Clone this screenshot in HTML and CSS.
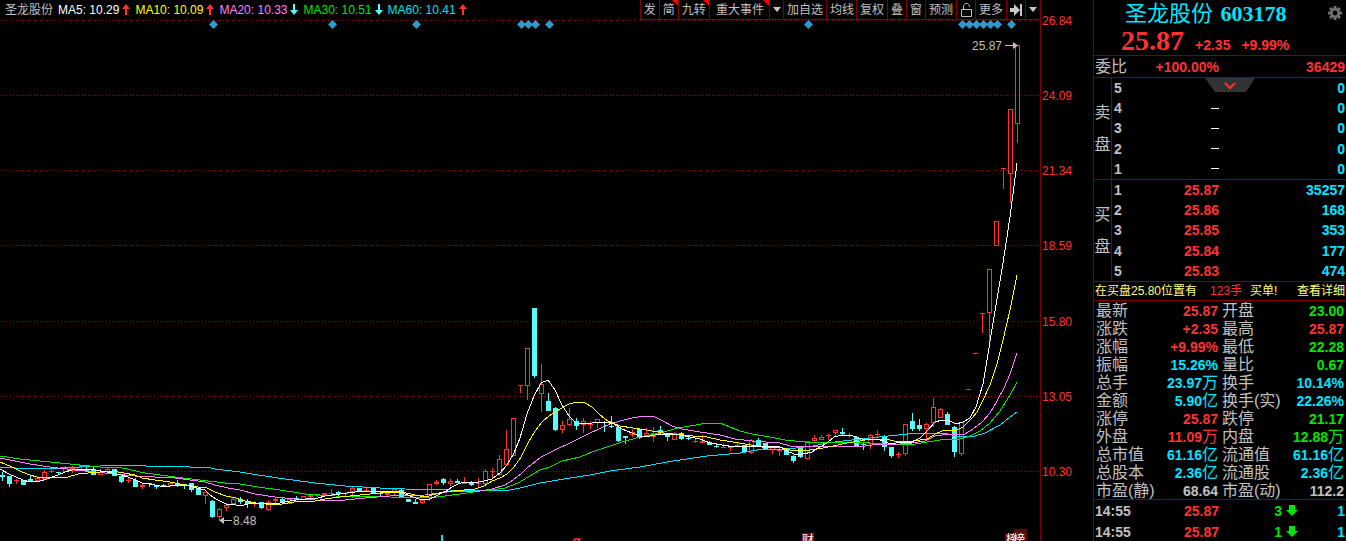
FILE: index.html
```html
<!DOCTYPE html>
<html lang="zh-CN">
<head>
<meta charset="utf-8">
<title>圣龙股份 603178</title>
<link rel="stylesheet" href="styles.css">
</head>
<body>
<main class="terminal">
  <section class="chart">
    <header class="chart-head">
      <div class="legend">
        <span class="legend-name">圣龙股份</span>
        <span class="ma ma5">MA5: 10.29<svg class="arrow up" viewBox="0 0 8 12"><path d="M4 0L8 5H5V11H3V5H0Z"/></svg></span>
        <span class="ma ma10">MA10: 10.09<svg class="arrow up" viewBox="0 0 8 12"><path d="M4 0L8 5H5V11H3V5H0Z"/></svg></span>
        <span class="ma ma20">MA20: 10.33<svg class="arrow down" viewBox="0 0 8 12"><path d="M4 11L8 6H5V0H3V6H0Z"/></svg></span>
        <span class="ma ma30">MA30: 10.51<svg class="arrow down" viewBox="0 0 8 12"><path d="M4 11L8 6H5V0H3V6H0Z"/></svg></span>
        <span class="ma ma60">MA60: 10.41<svg class="arrow up" viewBox="0 0 8 12"><path d="M4 0L8 5H5V11H3V5H0Z"/></svg></span>
      </div>
      <nav class="toolbar">
        <button>发</button><button class="flag">简</button><button class="flag">九转</button><button class="flag wide">重大事件</button><button class="tight" aria-label="展开事件"><svg width="8" height="5"><path d="M0 0H8L4 5Z"/></svg></button><button>加自选</button><button class="tight">均线</button><button>复权</button><button>叠</button><button>窗</button><button>预测</button><button aria-label="锁定"><svg width="12" height="15" class="lock"><path d="M1.500 7.500H11.500V14.500H1.500ZM3.500 7V3.500L5.500 1.500H7.500L9.500 3.500V5"/></svg></button><button>更多</button><button aria-label="移到最后"><svg width="12" height="12"><path d="M0 4H4V0L10 6L4 12V8H0ZM10 0H12V12H10Z"/></svg></button><button aria-label="展开菜单"><svg width="8" height="5"><path d="M0 0H8L4 5Z"/></svg></button>
      </nav>
    </header>
    <svg class="plot" viewBox="0 20 1093 521" preserveAspectRatio="xMinYMin meet">
      <path class="grid" d="M1 20.500H1040M1 95.500H1040M1 170.500H1040M1 245.500H1040M1 321.500H1040M1 396.500H1040M1 471.500H1040"/>
      <path class="axis" d="M1040.500 0V541"/>
      <g class="axis-text">
        <text x="1042" y="25">26.84</text><text x="1042" y="100">24.09</text><text x="1042" y="175">21.34</text><text x="1042" y="250">18.59</text><text x="1042" y="326">15.80</text><text x="1042" y="401">13.05</text><text x="1042" y="476">10.30</text>
      </g>
      <g id="diamonds" class="diamond"></g>
      <g id="candles"></g>
      <g class="lines">
        <polyline class="l60" points="0,467 15,468 60,468 80,467 100,466 125,465 145,465 146,466 187,466 190,467 207,467 215,469 240,472 258,475 285,479 315,483 345,486 380,488 405,489 450,490 510,490 520,488 540,483 570,478 590,475 610,471 640,467 673,461 707,456 740,453 757,450 787,449 813,446 827,443 843,441 870,438 907,434 925,433 945,433 955,436 975,436 985,433 1000,425 1010,417 1017,412"/>
        <polyline class="l30" points="0,456 20,459 50,462 80,465 100,467 122,468 145,473 175,477 200,480 225,483 240,484 258,487 280,490 305,494 335,496 390,497 430,498 445,496 460,494 480,491 492,490 505,488 518,483 528,477 540,470 550,467 562,461 580,457 592,452 610,446 622,442 640,437 660,433 678,428 690,426 707,423 720,423 730,427 740,431 752,434 770,437 785,440 805,442 840,442 870,443 895,445 915,444 940,440 960,439 970,436 980,431 990,423 1000,411 1010,395 1017,382"/>
        <polyline class="l20" points="0,458 15,461 30,464 50,467 75,470 95,472 115,474 135,476 155,477 175,478 190,480 205,482 215,485 228,488 240,490 255,494 275,497 295,499 315,500 345,500 365,498 390,496 425,495 440,493 455,491 480,491 492,489 505,485 513,480 521,474 527,468 541,457 555,450 570,443 590,433 610,424 620,421 632,418 645,416 655,417 663,421 672,426 682,429 700,432 720,435 735,439 752,441 780,443 790,446 800,447 838,446 865,446 880,444 900,444 912,443 925,441 935,436 950,434 965,434 973,429 982,422 990,413 997,401 1004,388 1010,374 1017,353"/>
        <polyline class="l10" points="0,462 12,467 22,472 30,475 37,477 68,477 78,474 88,473 100,472 112,471 124,473 135,475 142,478 155,480 170,482 185,485 198,487 205,487 215,492 226,496 236,498 245,501 256,503 266,504 274,505 282,504 294,502 315,501 325,499 340,497 360,495 380,493 402,492 415,495 425,497 436,494 443,492 464,490 475,489 484,486 492,481 500,478 507,474 514,467 521,457 528,443 535,431 542,422 549,416 560,409 569,404 577,402 585,403 592,407 600,415 608,421 620,426 633,428 647,430 663,433 693,436 707,437 720,440 733,442 745,444 762,447 783,448 790,450 810,450 823,448 833,446 847,443 860,441 870,439 887,439 897,442 913,441 927,439 937,433 945,430 955,431 963,427 972,418 977,412 983,400 990,385 997,364 1003,340 1010,310 1017,275"/>
        <polyline class="l5" points="0,469 9,474 16,477 23,480 30,482 40,481 47,479 58,475 65,472 72,470 82,469 95,470 107,472 121,475 128,477 135,480 142,483 150,484 160,486 170,486 180,485 190,486 197,488 205,490 210,495 216,499 226,504 236,505 240,506 248,504 256,503 268,504 280,503 290,501 296,500 306,499 318,498 325,496 340,494 355,492 385,491 400,492 408,495 413,497 422,500 430,499 438,495 446,491 452,487 458,484 464,482 474,483 484,481 492,479 500,473 507,465 514,453 520,438 527,414 534,396 541,383 548,380 555,390 562,405 569,416 576,423 585,424 592,423 605,422 614,424 622,429 632,433 640,436 650,436 660,434 680,435 690,437 700,439 710,443 722,445 735,447 750,446 780,447 787,451 794,454 803,454 812,452 820,447 827,443 834,437 842,435 850,435 856,437 862,439 876,439 884,441 890,444 902,442 912,442 920,438 927,431 935,422 942,420 950,421 956,424 963,422 970,418 976,407 983,384 987,360 994,317 1003,263 1010,217 1017,163"/>
      </g>
      <g class="callout">
        <text x="972" y="50">25.87</text><path d="M1005 45H1013V42L1018 45.500L1013 49V46H1005Z"/>
        <text x="233" y="525">8.48</text><path d="M232 520H224V517L219 520.500L224 524V521H232Z"/>
      </g>
      <rect class="cursor" x="441" y="535" width="2" height="6"/>
      <text class="q" x="572" y="546">q</text>
      <g class="tag">
        <rect x="802" y="533" width="12" height="8"/><text x="802" y="544">财</text>
        <rect x="1005" y="533" width="10" height="8"/><text x="1006" y="544">榜</text>
        <rect class="top" x="1014" y="529" width="13" height="12"/><text x="1013" y="544">榜</text>
      </g>
    </svg>
  </section>

  <aside class="quote">
    <header class="quote-head">
      <h1 class="title">圣龙股份 <span>603178</span></h1>
      <button class="gear" aria-label="设置"><svg width="14" height="14" viewBox="-7 -7 14 14"><g><path d="M-1.500 -7H1.500V7H-1.500Z"/><path d="M-1.500 -7H1.500V7H-1.500Z" transform="rotate(45)"/><path d="M-1.500 -7H1.500V7H-1.500Z" transform="rotate(90)"/><path d="M-1.500 -7H1.500V7H-1.500Z" transform="rotate(135)"/><circle r="5"/></g><circle class="hole" r="2.400"/></svg></button>
      <p class="price"><strong>25.87</strong><span>+2.35</span><span>+9.99%</span></p>
    </header>
    <div class="ratio"><span class="cn">委比</span><b class="red">+100.00%</b><b class="red">36429</b></div>

    <div class="book">
      <button class="fold" aria-label="展开卖盘"><svg width="50" height="14"><path class="plate" d="M0 0H50L41 14H10Z"/><path class="chev" d="M20 5L25 10L30 5"/></svg></button>
      <div class="side"><span>卖</span><span>盘</span></div>
      <table class="levels">
        <tr><th>5</th><td></td><td>0</td></tr>
        <tr><th>4</th><td class="none"><i></i></td><td>0</td></tr>
        <tr><th>3</th><td class="none"><i></i></td><td>0</td></tr>
        <tr><th>2</th><td class="none"><i></i></td><td>0</td></tr>
        <tr><th>1</th><td class="none"><i></i></td><td>0</td></tr>
      </table>
    </div>
    <div class="book">
      <div class="side"><span>买</span><span>盘</span></div>
      <table class="levels">
        <tr><th>1</th><td>25.87</td><td>35257</td></tr>
        <tr><th>2</th><td>25.86</td><td>168</td></tr>
        <tr><th>3</th><td>25.85</td><td>353</td></tr>
        <tr><th>4</th><td>25.84</td><td>177</td></tr>
        <tr><th>5</th><td>25.83</td><td>474</td></tr>
      </table>
    </div>
    <p class="notice"><span>在买盘25.80位置有</span><span class="lots">123手</span><span class="order">买单!</span><a href="#detail">查看详细</a></p>

    <table class="stats">
      <tr><th>最新</th><td class="red">25.87</td><th>开盘</th><td class="green">23.00</td></tr>
      <tr><th>涨跌</th><td class="red">+2.35</td><th>最高</th><td class="red">25.87</td></tr>
      <tr><th>涨幅</th><td class="red">+9.99%</td><th>最低</th><td class="green">22.28</td></tr>
      <tr><th>振幅</th><td class="cyan">15.26%</td><th>量比</th><td class="green">0.67</td></tr>
      <tr><th>总手</th><td class="cyan">23.97<span>万</span></td><th>换手</th><td class="cyan">10.14%</td></tr>
      <tr><th>金额</th><td class="cyan">5.90<span>亿</span></td><th>换手(实)</th><td class="cyan">22.26%</td></tr>
      <tr><th>涨停</th><td class="red">25.87</td><th>跌停</th><td class="green">21.17</td></tr>
      <tr><th>外盘</th><td class="red">11.09<span>万</span></td><th>内盘</th><td class="green">12.88<span>万</span></td></tr>
      <tr><th>总市值</th><td class="cyan">61.16<span>亿</span></td><th>流通值</th><td class="cyan">61.16<span>亿</span></td></tr>
      <tr><th>总股本</th><td class="cyan">2.36<span>亿</span></td><th>流通股</th><td class="cyan">2.36<span>亿</span></td></tr>
      <tr><th>市盈(静)</th><td>68.64</td><th>市盈(动)</th><td>112.2</td></tr>
    </table>
    <table class="ticks">
      <tr><th>14:55</th><td class="red">25.87</td><td class="green">3 <svg width="12" height="11"><path d="M3 0H9V5H12L6 11L0 5H3Z"/></svg></td><td class="cyan">1</td></tr>
      <tr><th>14:55</th><td class="red">25.87</td><td class="green">1 <svg width="12" height="11"><path d="M3 0H9V5H12L6 11L0 5H3Z"/></svg></td><td class="cyan">1</td></tr>
    </table>
  </aside>
</main>
<script src="chart.js"></script>
</body>
</html>
```
FILE: styles.css
```css
* { box-sizing: border-box; }

body {
  margin: 0;
  background: #000;
  color: #c0c0c0;
  font: 12px/16px "Liberation Sans", "Noto Sans CJK SC", sans-serif;
  overflow: hidden;
}

button {
  margin: 0;
  padding: 0;
  border: 0;
  background: none;
  color: inherit;
  font: inherit;
}

.terminal { display: flex; height: 100vh; }

/* chart */
.chart { flex: 1; min-width: 0; display: flex; flex-direction: column; }
.chart-head {
  display: flex;
  justify-content: space-between;
  height: 20px;
  margin-right: 52px;
  white-space: nowrap;
}
.legend { display: flex; align-items: center; gap: 5px; padding-left: 5px; }
.ma { display: flex; align-items: center; gap: 3px; }
.ma5 { color: #fff; }
.ma10 { color: #ff0; }
.ma20 { color: #ff80ff; }
.ma30 { color: #00e600; }
.ma60 { color: #00e0e8; }
.arrow { width: 8px; height: 12px; }
.up { fill: #ff3232; }
.down { fill: #54fcfc; }

.toolbar { display: flex; border: solid #800000; border-width: 0 1px 1px 0; }
.toolbar button {
  position: relative;
  display: flex;
  align-items: center;
  padding: 0 3px;
  border-left: 1px solid #800000;
}
.toolbar .wide { padding: 0 5px 0 6px; }
.toolbar .tight { padding-right: 2px; }
.toolbar svg { fill: #c8c8c8; }
.toolbar .lock { fill: none; stroke: #c0c0c0; }
.flag::after {
  content: "";
  position: absolute;
  top: 0;
  right: 0;
  border: 3px solid;
  border-color: #f00 #f00 transparent transparent;
}

.plot { flex: 1; min-height: 0; width: 100%; overflow: visible; }
.grid { stroke: #900000; stroke-dasharray: 1 2; shape-rendering: crispEdges; }
.axis { stroke: #800000; shape-rendering: crispEdges; }
.axis-text { fill: #ff3232; }
.plot text { font-size: 12px; }
.diamond { fill: #2f9bcb; }
#candles { shape-rendering: crispEdges; }
.rise { fill: none; stroke: #ff3232; }
.fall { fill: #54fcfc; stroke: none; }
.lines { fill: none; shape-rendering: crispEdges; }
.l5 { stroke: #fff; }
.l10 { stroke: #ff0; }
.l20 { stroke: #ff80ff; }
.l30 { stroke: #00e600; }
.l60 { stroke: #00e0f8; }
.callout { fill: #c0c0c0; }
.cursor { fill: #00e0f8; }
.plot .q { fill: #ff3232; font-size: 14px; font-weight: bold; font-style: italic; }
.tag rect { fill: #780000; }
.tag .top { fill: #5c0a0a; }
.tag text { fill: #fff; }

/* quote panel */
.quote {
  flex: 0 0 253px;
  border-left: 1px solid #800000;
  font-size: 14px;
}
.quote-head { position: relative; height: 56px; border-bottom: 1px solid #800000; }
.title {
  margin: 0;
  padding: 1px 0 0 31px;
  color: #00e5ff;
  font: 22px/26px "Liberation Serif", "Noto Sans CJK SC", serif;
}
.title span { margin-left: 2px; font-weight: bold; }
.gear { position: absolute; top: 6px; right: 4px; height: 14px; line-height: 0; }
.gear g { fill: #707070; }
.hole { fill: #000; }
.price {
  display: flex;
  align-items: baseline;
  gap: 11px;
  margin: 0;
  padding-left: 27px;
  color: #ff3232;
  font-weight: bold;
  font-size: 14px;
  line-height: 28px;
}
.price strong { font: bold 28px/28px "Liberation Serif", serif; }

.red { color: #ff3232; }
.green { color: #00e600; }
.cyan { color: #00e5ff; }

.ratio {
  display: grid;
  grid-template-columns: 40px 84px 1fr;
  align-items: center;
  height: 22px;
  padding: 0 1px;
  border-bottom: 1px solid #800000;
  text-align: right;
}
.cn { font-size: 16px; text-align: left; }

.book { position: relative; display: flex; height: 102px; border-bottom: 1px solid #800000; }
.side {
  flex: 0 0 18px;
  display: flex;
  flex-direction: column;
  justify-content: center;
  gap: 16px;
  border-right: 1px solid #800000;
  font-size: 16px;
  text-align: center;
}
.fold { position: absolute; top: 0; left: 111px; line-height: 0; }
.plate { fill: #333; }
.chev { fill: none; stroke: #ff3232; stroke-width: 2; }

table { width: 100%; border-collapse: collapse; table-layout: fixed; font-size: 14px; font-weight: bold; }
th, td { padding: 0; text-align: right; white-space: nowrap; }
th { text-align: left; }
.levels td { color: #ff3232; }
.levels td:last-child { color: #00e5ff; padding-right: 1px; }
.levels th { width: 22px; padding-left: 2px; }
.levels td:nth-child(2) { width: 85px; }
.none i { display: block; width: 8px; height: 1px; margin-left: auto; background: #fff; }

.notice {
  display: flex;
  align-items: center;
  height: 19px;
  margin: 0;
  padding: 0 1px;
  border-bottom: 1px solid #800000;
  color: #ffff80;
  font-size: 12px;
  white-space: nowrap;
}
.notice a { margin-left: auto; color: inherit; text-decoration: none; }
.lots { margin-left: 13px; color: #ff3232; }
.order { margin-left: 8px; }

.stats { border-bottom: 1px solid #800000; }
.stats tr { height: 18px; line-height: 16px; }
.stats th, .stats td { padding-top: 2px; }
.stats th { padding-left: 2px; font-size: 16px; font-weight: normal; }
.stats td { padding-right: 2px; }
.stats th:nth-child(1), .stats th:nth-child(3) { width: 66px; }
.stats td:nth-child(2) { width: 60px; }
.stats span { font-size: 16px; font-weight: normal; line-height: 14px; }

.ticks tr { height: 21px; }
.ticks th { padding-left: 1px; width: 50px; }
.ticks td:nth-child(2) { width: 75px; }
.ticks td:nth-child(3) { width: 79px; }
.ticks td:last-child { padding-right: 1px; }
.ticks svg { fill: #00e600; }
```
FILE: chart.js
```js
// Each candle: direction, high, body top, body bottom, low (chart y values).
const candles = `
f 472 475 477 481|f 476 476 484 487|r 479 480 480 483|f 480 480 485 485|f 476 479 481 481|r 477 478 480 480|r 470 472 478 478
r 469 471 471 472|f 472 472 473 475|r 466 468 471 471|r 466 468 470 472|r 464 467 470 470|f 465 469 471 471|f 467 469 475 475
r 469 472 474 474|r 468 469 471 471|f 469 469 476 476|f 476 476 482 483|r 478 480 480 482|f 478 480 487 487|r 483 485 486 488
f 483 483 484 487|f 485 485 487 489|f 484 485 486 486|r 483 483 485 486|f 480 483 485 487|f 484 484 485 489|f 483 483 490 492
f 488 488 495 495|r 492 492 495 503|f 500 501 517 518|r 508 509 516 519|r 503 505 507 510|r 498 499 503 503|f 497 499 502 504
f 499 501 504 508|r 501 503 503 506|f 502 502 508 509|r 500 502 509 510|r 497 499 500 502|f 498 499 502 503|r 499 499 503 503
f 496 498 500 500|r 496 496 499 499|r 495 495 496 498|r 495 495 495 496|r 493 493 494 494|r 489 493 493 494|f 491 492 494 496
r 492 493 493 495|r 486 488 491 497|f 488 488 492 492|r 487 490 491 491|f 488 488 493 493|f 492 493 494 496|r 491 493 494 496
r 489 489 492 494|f 489 490 498 498|f 499 499 502 502|f 499 502 504 504|r 499 500 502 503|r 484 484 497 500|r 480 482 483 484
f 478 479 483 485|r 479 481 483 485|f 479 481 483 483|r 477 482 483 483|f 481 483 485 486|r 478 483 483 487|r 469 471 483 483
r 468 471 471 478|r 455 459 474 475|r 430 449 464 464|r 418 418 455 455|r 385 385 385 392|r 348 348 385 399|f 308 308 376 378
r 364 384 393 411|f 393 401 411 411|f 407 408 430 431|r 421 425 429 432|r 408 419 424 425|f 418 421 426 430|r 418 421 424 432
r 421 424 424 428|r 419 419 422 427|f 421 422 423 432|f 416 426 427 428|f 427 427 441 442|f 436 436 438 444|r 429 432 434 436
f 428 429 438 439|r 428 433 435 435|r 427 433 436 441|f 426 430 433 434|f 435 435 437 441|r 432 433 439 439|f 432 433 439 440
f 435 438 439 440|r 438 441 441 442|r 435 441 442 442|f 441 442 445 445|f 443 446 447 448|r 443 447 447 447|r 446 446 447 450
r 443 445 445 445|f 445 445 452 452|r 439 440 452 453|f 438 440 446 446|f 443 443 450 450|r 446 447 449 453|r 448 450 450 455
f 450 450 455 455|f 455 456 461 463|f 447 447 457 458|r 441 441 458 458|r 435 438 440 442|r 435 437 439 439|r 434 435 435 439
r 430 430 432 435|f 428 432 434 435|r 433 435 435 437|f 436 437 447 447|f 443 444 445 450|r 434 435 443 448|r 430 434 434 436
f 435 436 447 451|f 447 447 456 458|r 452 454 454 457|r 424 424 453 455|f 413 421 429 431|f 419 425 429 431|r 423 424 428 438
r 398 407 422 426|r 408 409 417 417|f 412 414 425 425|f 426 427 452 457|r 422 422 453 455|r 389 389 389 389|r 353 353 353 353
r 313 313 313 332|r 269 269 312 346|r 221 221 245 245|r 168 168 168 188|r 109 109 173 202|r 45 45 123 142`
  .trim().split(/[|\n]/).map(row => row.split(" "));

const step = 7;
document.getElementById("candles").innerHTML = candles.map(([dir, ...values], i) => {
  const x = 2 + i * step;
  const [high, top, bottom, low] = values.map(Number);
  if (dir === "f") {
    return `<path class="fall" d="M${x} ${high}h1V${low}h-1ZM${x - 2} ${top}h5V${bottom}h-5Z"/>`;
  }
  const c = x + 0.5;
  return `<path class="rise" d="M${c} ${high}V${top}M${c} ${bottom}V${low + 1}` +
    (top === bottom
      ? `M${x - 2} ${top + 0.5}h5"/>`
      : `M${x - 1.5} ${top + 0.5}h4V${bottom + 0.5}h-4Z"/>`);
}).join("");

document.getElementById("diamonds").innerHTML =
  [213, 332, 416, 521, 528, 535, 549, 808, 962, 969, 976, 983, 990, 997, 1011]
    .map(x => `<path d="M${x + 0.5} 20L${x + 5} 24.500L${x + 0.5} 29L${x - 4} 24.500Z"/>`).join("");
```
